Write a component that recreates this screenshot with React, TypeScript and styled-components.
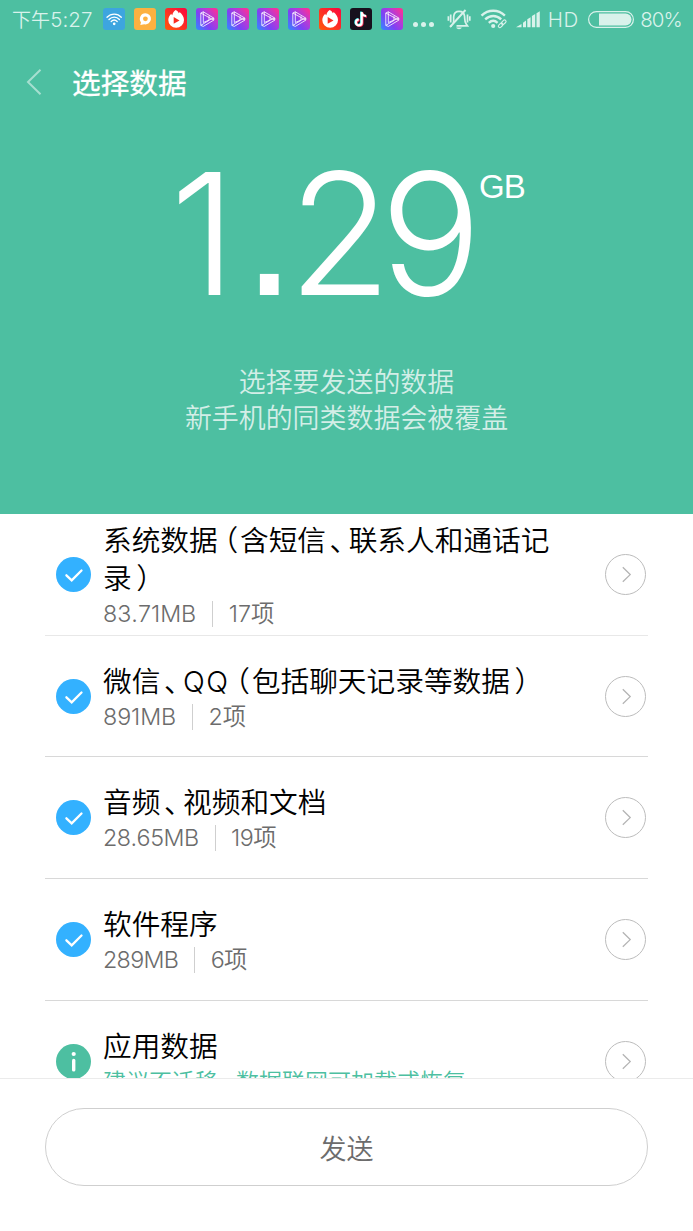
import React from "react";
import styled, { createGlobalStyle } from "styled-components";

const GREEN = "#4dbfa1";
const PALE = "#d9f2eb";

const GlobalStyle = createGlobalStyle`
  * { box-sizing: border-box; }
  body {
    margin: 0;
    background: #fff;
    font-family: Inter, "Noto Sans CJK SC", sans-serif;
    font-weight: 350;
  }
  button { font: inherit; }
  svg { display: block; flex: none; }
`;

const Screen = styled.div`
  width: 693px;
  height: 1231px;
  display: flex;
  flex-direction: column;
  overflow: hidden;
  background: #fff;
`;

const Header = styled.header`
  height: 514px;
  flex: none;
  background: ${GREEN};
  color: #fff;
`;

const StatusBar = styled.div`
  height: 38px;
  padding-left: 12px;
  display: flex;
  align-items: center;
  color: ${PALE};
  font-size: 20.5px;
  line-height: 38px;
  white-space: nowrap;
`;

const Clock = styled.div`
  width: 91.4px;
  padding-top: 2px;
  letter-spacing: 0.1px;
`;

const ClockPeriod = styled.span`
  font-size: 19px;
`;

const AppIcons = styled.div`
  display: flex;
  gap: 8.8px;
`;

const Dots = styled.div`
  display: flex;
  gap: 2.6px;
  margin: 11px 0 0 10px;
  i {
    width: 5.4px;
    height: 5.4px;
    border-radius: 50%;
    background: ${PALE};
  }
`;

const Indicators = styled.div`
  display: flex;
  align-items: center;
  margin-left: 12.8px;
`;

const Gap = styled.span<{ $width: number }>`
  width: ${(p) => p.$width}px;
`;

const StatusText = styled.span<{ $width: number; $spacing: number }>`
  width: ${(p) => p.$width}px;
  padding-top: 2px;
  letter-spacing: ${(p) => p.$spacing}px;
`;

const TitleBar = styled.div`
  height: 90px;
  padding-left: 26px;
  display: flex;
  align-items: center;

  svg { margin-bottom: 3px; }
`;

const Title = styled.h1`
  margin: 2px 0 0 30px;
  font-size: 28.7px;
  line-height: 40px;
  font-weight: 400;
  -webkit-text-stroke: 0.3px #fff;
`;

const Total = styled.div`
  height: 230px;
  padding: 3px 0 0 170px;
  display: flex;
  align-items: flex-start;
`;

const TotalNumber = styled.div`
  width: 309px;
  height: 205px;
  display: flex;
  align-items: baseline;
  font-size: 169px;
  line-height: 205px;
  font-weight: 310;
`;

const Digit = styled.span<{ $width: number }>`
  width: ${(p) => p.$width}px;
`;

const Point = styled.span`
  width: 46px;
  font-family: "Liberation Sans", sans-serif;
  font-size: 196px;
  line-height: 1px;
`;

const Unit = styled.span`
  padding-top: 36px;
  font-family: "Liberation Sans", sans-serif;
  font-size: 33px;
  line-height: 40px;
  letter-spacing: -1px;
`;

const Hint = styled.p`
  margin: 6.6px 0 0;
  text-align: center;
  color: #d3eee7;
  font-size: 26.95px;
  line-height: 36px;
`;

const List = styled.main`
  height: 564px;
  flex: none;
  padding: 0 45px;
  overflow: hidden;
`;

const Row = styled.section`
  height: 121.7px;
  padding: 0 2px 0 11px;
  display: flex;
  align-items: center;
  border-bottom: 1px solid #d8d8d8;

  &:first-child { border-color: #e8e8e8; }
`;

const RowText = styled.div`
  flex: 1;
  margin-left: 12px;
  padding-top: 3px;
`;

const RowTitle = styled.div`
  width: 470px;
  color: #000;
  font-size: 28.7px;
  line-height: 38px;
`;

const Punct = styled.span<{ $before: number; $after: number }>`
  margin: 0 ${(p) => p.$after}px 0 ${(p) => p.$before}px;
  font-feature-settings: "halt";
`;

const Latin = styled.span`
  letter-spacing: 1.5px;
`;

const RowMeta = styled.div<{ $tracking?: number }>`
  height: 32px;
  display: flex;
  align-items: center;
  color: #6c6c6c;
  font-size: 23.3px;
  line-height: 32px;
  letter-spacing: ${(p) => p.$tracking ?? 0}px;
  font-kerning: none;
`;

const Divider = styled.i`
  width: 1px;
  height: 26px;
  margin: 0 15.5px 0 16px;
  background: #cfcfcf;
`;

const Advice = styled.div`
  height: 32px;
  color: ${GREEN};
  font-size: 23px;
  line-height: 32px;
  white-space: nowrap;
`;

const Footer = styled.footer`
  flex: 1;
  padding: 29px 45px 0;
  border-top: 1px solid #ebebeb;
  background: #fff;
`;

const SendButton = styled.button`
  display: block;
  width: 603px;
  height: 78px;
  padding: 0;
  border: 1px solid #cfcfcf;
  border-radius: 39px;
  background: #fff;
  color: #6c6c6c;
  font-size: 27px;
`;

type AppKind = "wifi" | "chat" | "fire" | "play" | "note";

function AppIcon({ kind, id }: { kind: AppKind; id: string }) {
  const fills: Record<AppKind, string> = {
    wifi: "#3da5df",
    chat: "#fdb140",
    fire: `url(#${id})`,
    play: `url(#${id})`,
    note: "#17101d",
  };
  return (
    <svg width="22" height="22" viewBox="0 0 22 22" fill="none">
      <defs>
        {kind === "play" ? (
          <linearGradient id={id} x1="0" y1="1" x2="1" y2="0.2">
            <stop offset="0" stopColor="#2f8dff" />
            <stop offset="0.42" stopColor="#7d42f5" />
            <stop offset="0.7" stopColor="#b33bd8" />
            <stop offset="1" stopColor="#f5319c" />
          </linearGradient>
        ) : (
          <linearGradient id={id} x1="0" y1="1" x2="1" y2="0">
            <stop offset="0" stopColor="#ff5a0a" />
            <stop offset="1" stopColor="#fb0440" />
          </linearGradient>
        )}
      </defs>
      <rect width="22" height="22" rx="3" fill={fills[kind]} />
      {kind === "wifi" && (
        <g stroke="#fff" strokeWidth="1.3" strokeLinecap="round">
          <path d="M4 9.3C8 5 14.500 5 18.300 9.300" />
          <path d="M6 11.500c3-3.200 7.500-3.200 10.400 0" />
          <path d="M8.200 13.500c1.700-1.700 4.200-1.700 6 0" />
          <circle cx="11.200" cy="15.800" r="0.700" fill="#fff" />
        </g>
      )}
      {kind === "chat" && (
        <>
          <path
            d="M11.300 5.200a5.600 5.600 0 1 1-1 11.100L6.300 17l.7-2.800a5.600 5.600 0 0 1 4.300-9z"
            fill="#fff"
          />
          <circle cx="11.400" cy="10.800" r="2.400" fill="#fdb140" />
        </>
      )}
      {kind === "fire" && (
        <>
          <path
            d="M10.700 2c1.800 1 2.800 2 3.100 3.300.4-.4.700-.8.800-1.300 2.600 2.300 4.400 4.800 4.400 8a7.800 7.800 0 0 1-15.700 0c0-2.600 1.300-4.800 3-6.300.1.800.5 1.300 1 1.600C7.600 5 8.800 3.200 10.700 2z"
            fill="#fff"
          />
          <path d="M8.700 9v6.800l5.800-3.400z" fill="#fb2c21" />
        </>
      )}
      {kind === "play" && (
        <g stroke="#fff" strokeWidth="0.9" strokeLinejoin="round" strokeOpacity="0.9">
          <path d="M4.800 5 7.300 3.800l10.500 6.300v2L7.300 18.400l-2.500-1z" />
          <path d="M7.300 3.800v10.700l10.500-4.400M4.800 17.400l8.200-5V8.200M4.800 5l13 7.100" />
        </g>
      )}
      {kind === "note" && (
        <g strokeWidth="2.200">
          <path
            d="M11.600 4v10.400a2.900 2.900 0 1 1-2.900-2.900M11.600 4c.2 2.400 2 3.900 4.400 4"
            stroke="#26dfe0"
            transform="translate(-.5 -.4)"
          />
          <path
            d="M11.600 4v10.400a2.900 2.900 0 1 1-2.900-2.900M11.600 4c.2 2.400 2 3.900 4.400 4"
            stroke="#f72d58"
            transform="translate(.9 .6)"
          />
          <path
            d="M11.700 4v10.400a2.900 2.900 0 1 1-2.900-2.900M11.700 4c.2 2.400 2 3.900 4.400 4"
            stroke="#fff"
          />
        </g>
      )}
    </svg>
  );
}

const BellOff = () => (
  <svg width="24" height="24" viewBox="0 0 24 24" fill="none" stroke={PALE} strokeWidth="1.700">
    <path d="M6 16.800C7.300 14.500 6.400 12 6.700 9.500c.3-3.200 2.400-5.200 5.400-5.200s5.200 2 5.500 5.200c.2 2.500-.2 5 1.600 7.500l1.300 1.800H9.500M3.500 18.800H5" />
    <path d="M3 20 18.500 3" strokeWidth="1.900" />
    <path d="M9.200 20.500h5.600c-.9 2.300-4.700 2.300-5.600 0z" fill={PALE} stroke="none" />
    <path d="M3.700 7.500v8M1.400 9.300v4.400M20.500 7.500v8M22.800 9.300v4.400" />
  </svg>
);

const Wifi = () => (
  <svg width="28" height="22" viewBox="0 0 28 22" fill="none" stroke={PALE}>
    <g strokeWidth="2.400">
      <path d="M1.500 7.600c6.800-6.400 16.600-6.400 23.400 0" />
      <path d="M5.200 11.300c4.900-4.400 11.200-4.400 16 0" />
      <path d="M8.800 14.800c2.800-2.500 6-2.500 8.800 0" />
    </g>
    <circle cx="13.200" cy="18" r="2.100" fill={PALE} stroke="none" />
    <g strokeWidth="1.100">
      <rect x="18" y="15.800" width="5.400" height="3" rx="1.500" transform="rotate(-45 20.700 17.300)" />
      <rect x="21" y="12.800" width="5.400" height="3" rx="1.500" transform="rotate(-45 23.700 14.300)" />
    </g>
  </svg>
);

const Signal = () => (
  <svg width="24" height="17" viewBox="0 0 24 17" fill={PALE}>
    <path d="M0 16.200 5.500 13v3.200zM7 11.800l3-2.200v6.600H7zM11.300 8.200l3.300-2v10h-3.300zM15.900 5l3.300-2v13.200h-3.300zM20.500 2.200l3.300-2v16h-3.300z" />
  </svg>
);

const Battery = () => (
  <svg width="46" height="17" viewBox="0 0 46 17" fill="none">
    <rect x="0.600" y="0.600" width="44.800" height="15.800" rx="7.900" stroke={PALE} strokeWidth="1.200" />
    <path d="M11 2.500h26.500a6 6 0 0 1 0 12H11z" fill={PALE} />
  </svg>
);

const BackArrow = () => (
  <svg width="16" height="28" viewBox="0 0 16 28" fill="none">
    <path d="M14.500 1.800 2 14l12.500 12.200" stroke="#a6dfd0" strokeWidth="2" />
  </svg>
);

const CheckMark = () => (
  <svg width="35" height="35" viewBox="0 0 35 35" fill="none">
    <circle cx="17.500" cy="17.500" r="17.500" fill="#33b1ff" />
    <path
      d="m10.400 18.300 5.300 5.100 9.800-9.900"
      stroke="#fff"
      strokeWidth="2.300"
      strokeLinecap="round"
    />
  </svg>
);

const InfoMark = () => (
  <svg width="35" height="35" viewBox="0 0 35 35">
    <circle cx="17.500" cy="17.500" r="17.500" fill={GREEN} />
    <circle cx="17.700" cy="10" r="2.100" fill="#fff" />
    <rect x="16" y="14.800" width="3.400" height="12.800" rx="1.700" fill="#fff" />
  </svg>
);

const Detail = () => (
  <svg width="41" height="41" viewBox="0 0 41 41" fill="none">
    <circle cx="20.500" cy="20.500" r="20" stroke="#bcbcbc" />
    <path d="m17.800 13.300 7.400 7.300-7.400 7.200" stroke="#b4b4b4" strokeWidth="1.300" />
  </svg>
);

const Open = () => <Punct $before={6} $after={1.9}>（</Punct>;
const Close = () => <Punct $before={4.5} $after={0}>）</Punct>;
const Comma = () => <Punct $before={3.5} $after={4.8}>、</Punct>;

interface Item {
  title: React.ReactNode;
  size?: string;
  count?: string;
  tracking?: number;
  advice?: React.ReactNode;
}

const items: Item[] = [
  {
    title: <>系统数据<Open />含短信<Comma />联系人和通话记录<Close /></>,
    size: "83.71MB",
    count: "17项",
    tracking: 0,
  },
  {
    title: <>微信<Comma /><Latin>QQ</Latin><Open />包括聊天记录等数据<Close /></>,
    size: "891MB",
    count: "2项",
    tracking: -0.1,
  },
  { title: <>音频<Comma />视频和文档</>, size: "28.65MB", count: "19项", tracking: -0.5 },
  { title: "软件程序", size: "289MB", count: "6项", tracking: -0.7 },
  {
    title: "应用数据",
    advice: <>建议不迁移<Punct $before={1} $after={5.5}>，</Punct>数据联网可加载或恢复</>,
  },
];

const apps: AppKind[] = ["wifi", "chat", "fire", "play", "play", "play", "play", "fire", "note", "play"];

export default function App() {
  return (
    <>
      <GlobalStyle />
      <Screen>
        <Header>
          <StatusBar>
            <Clock>
              <ClockPeriod>下午</ClockPeriod>5:27
            </Clock>
            <AppIcons>
              {apps.map((kind, i) => (
                <AppIcon key={i} kind={kind} id={`app-${i}`} />
              ))}
            </AppIcons>
            <Dots><i /><i /><i /></Dots>
            <Indicators>
              <BellOff />
              <Gap $width={9} />
              <Wifi />
              <Gap $width={8} />
              <Signal />
              <Gap $width={8} />
              <StatusText $width={40.6} $spacing={0.6}>HD</StatusText>
              <Battery />
              <Gap $width={6} />
              <StatusText $width={42} $spacing={-1}>80%</StatusText>
            </Indicators>
          </StatusBar>
          <TitleBar>
            <BackArrow />
            <Title>选择数据</Title>
          </TitleBar>
          <Total>
            <TotalNumber>
              <Digit $width={72}>1</Digit>
              <Point>.</Point>
              <Digit $width={92}>2</Digit>
              <Digit $width={97}>9</Digit>
            </TotalNumber>
            <Unit>GB</Unit>
          </Total>
          <Hint>
            选择要发送的数据
            <br />
            新手机的同类数据会被覆盖
          </Hint>
        </Header>
        <List>
          {items.map((item, i) => (
            <Row key={i}>
              {item.advice ? <InfoMark /> : <CheckMark />}
              <RowText>
                <RowTitle>{item.title}</RowTitle>
                {item.advice ? (
                  <Advice>{item.advice}</Advice>
                ) : (
                  <RowMeta $tracking={item.tracking}>
                    {item.size}
                    <Divider />
                    {item.count}
                  </RowMeta>
                )}
              </RowText>
              <Detail />
            </Row>
          ))}
        </List>
        <Footer>
          <SendButton>发送</SendButton>
        </Footer>
      </Screen>
    </>
  );
}
